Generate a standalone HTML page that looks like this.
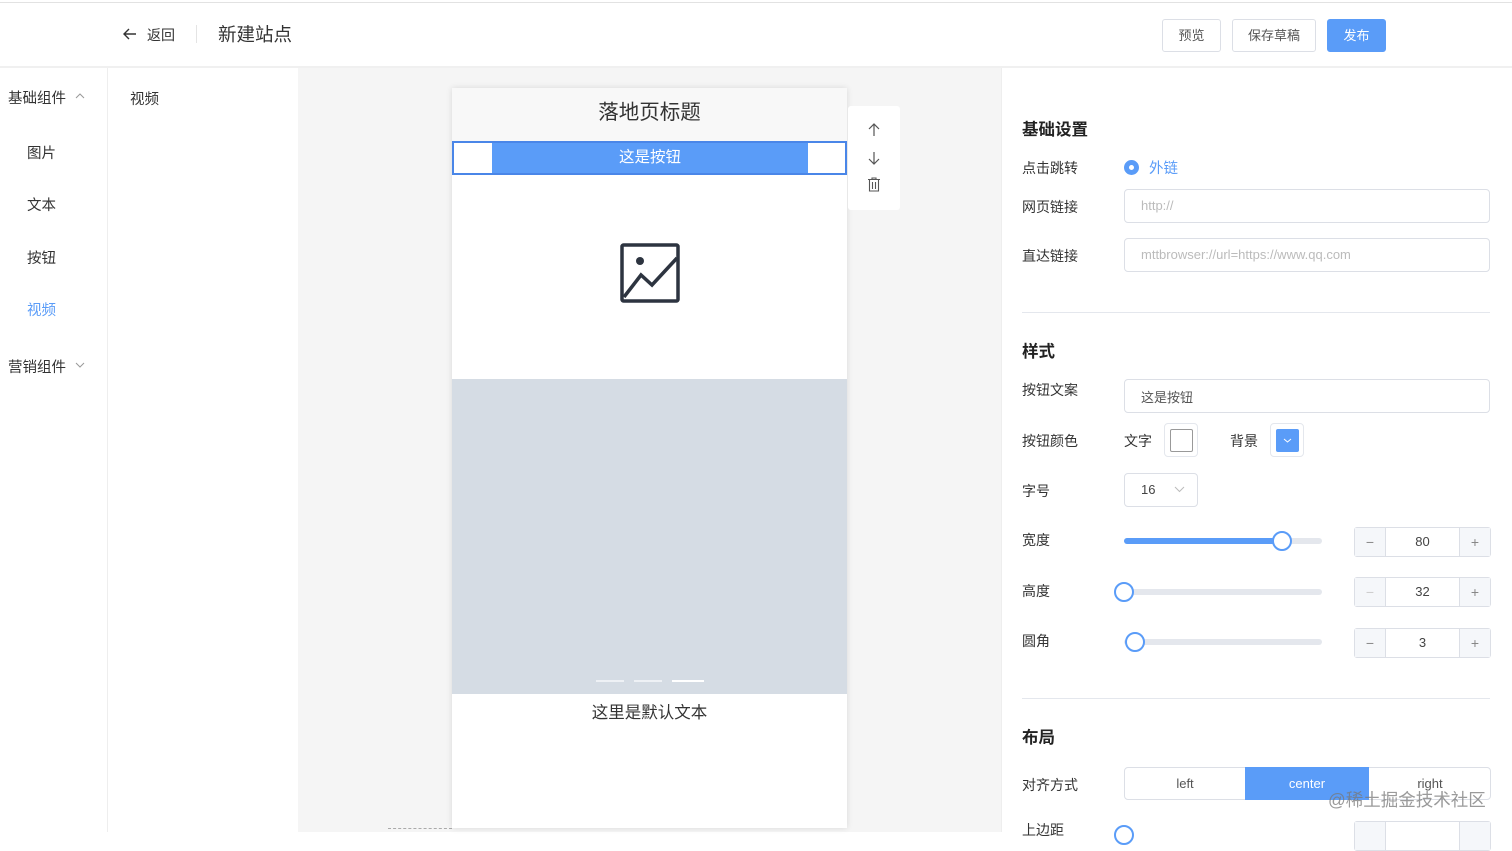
<!DOCTYPE html>
<html><head><meta charset="utf-8"><style>
*{box-sizing:border-box;margin:0;padding:0}
body{width:1512px;height:832px;overflow:hidden;background:#fff;font-family:"Liberation Sans","Noto Sans CJK SC",sans-serif;color:#333;position:relative}
.a{position:absolute}
.lab{position:absolute;left:1022px;font-size:14px;color:#333}
.h{position:absolute;left:1022px;font-size:16px;font-weight:bold;color:#222}
.inp{position:absolute;left:1124px;width:366px;height:34px;border:1px solid #dcdfe6;border-radius:4px;font-size:13px;color:#bbb;padding:8px 16px}
.btn{position:absolute;top:19px;height:33px;border:1px solid #dcdfe6;border-radius:3px;font-size:13px;color:#555;text-align:center;line-height:31px}
.num{position:absolute;left:1354px;width:137px;height:30px;border:1px solid #dcdfe6;border-radius:3px;background:#fff}
.num span{position:absolute;top:0;height:28px;line-height:28px;text-align:center;color:#888;font-size:14px}
.num .m{left:0;width:31px;background:#f5f7fa;border-right:1px solid #dcdfe6}
.num .p{right:0;width:31px;background:#f5f7fa;border-left:1px solid #dcdfe6}
.num .v{left:31px;right:31px;color:#444;font-size:13px}
.track{position:absolute;left:1124px;width:198px;height:6px;border-radius:3px;background:#e4e7ed}
.knob{position:absolute;width:20px;height:20px;border:2px solid #5a9cf8;border-radius:50%;background:#fff}
.sep{position:absolute;left:1022px;width:468px;height:1px;background:#e4e7ed}
</style></head><body>
<div class="a" style="left:0;top:2px;width:1512px;height:1px;background:#e2e2e2"></div>
<div class="a" style="left:0;top:66px;width:1512px;height:2px;background:#f0f0f0"></div>
<svg class="a" style="left:122px;top:27px" width="16" height="14" viewBox="0 0 16 14"><path d="M14 7H2M7 2L2 7l5 5" stroke="#333" stroke-width="1.4" fill="none"/></svg>
<div class="a" style="left:147px;top:25px;font-size:14px">返回</div>
<div class="a" style="left:196px;top:25px;width:1px;height:18px;background:#e4e4e4"></div>
<div class="a" style="left:218px;top:21px;font-size:18.5px;color:#333">新建站点</div>
<div class="btn" style="left:1162px;width:59px">预览</div>
<div class="btn" style="left:1232px;width:84px">保存草稿</div>
<div class="btn" style="left:1327px;width:59px;background:#5a9cf8;border-color:#5a9cf8;color:#fff">发布</div>
<!-- left -->
<div class="a" style="left:107px;top:68px;width:1px;height:764px;background:#eee"></div>
<div class="a" style="left:8px;top:87px;font-size:14.5px">基础组件</div>
<svg class="a" style="left:75px;top:93px" width="10" height="6" viewBox="0 0 10 6"><path d="M1 5l4-4 4 4" stroke="#999" fill="none"/></svg>
<div class="a" style="left:27px;top:142px;font-size:14.5px">图片</div>
<div class="a" style="left:27px;top:194px;font-size:14.5px">文本</div>
<div class="a" style="left:27px;top:247px;font-size:14.5px">按钮</div>
<div class="a" style="left:27px;top:299px;font-size:14.5px;color:#5a9cf8">视频</div>
<div class="a" style="left:8px;top:356px;font-size:14.5px">营销组件</div>
<svg class="a" style="left:75px;top:362px" width="10" height="6" viewBox="0 0 10 6"><path d="M1 1l4 4 4-4" stroke="#999" fill="none"/></svg>
<div class="a" style="left:130px;top:88px;font-size:14.5px">视频</div>
<!-- canvas -->
<div class="a" style="left:298px;top:68px;width:703px;height:764px;background:#f5f5f5"></div>
<div class="a" style="left:1001px;top:68px;width:1px;height:764px;background:#eee"></div>
<div class="a" style="left:388px;top:828px;width:64px;border-top:1px dashed #aaa"></div>
<div class="a" style="left:452px;top:88px;width:395px;height:740px;background:#fff;box-shadow:0 0 6px rgba(0,0,0,.12)"></div>
<div class="a" style="left:452px;top:88px;width:395px;height:53px;background:#f8f8f8;text-align:center;font-size:20.5px;line-height:50px;color:#333">落地页标题</div>
<div class="a" style="left:452px;top:141px;width:395px;height:34px;border:2px solid #4a86e8;background:#fff"></div>
<div class="a" style="left:492px;top:143px;width:316px;height:30px;background:#5a9cf8;color:#fff;text-align:center;line-height:29px;font-size:15.5px">这是按钮</div>
<svg class="a" style="left:620px;top:243px" width="60" height="60" viewBox="0 0 60 60"><rect x="2" y="2" width="56" height="56" rx="1.5" fill="none" stroke="#2d3440" stroke-width="3.5"/><circle cx="20" cy="18" r="4" fill="#2d3440"/><path d="M4 54L21 32l11 10 25-27" fill="none" stroke="#2d3440" stroke-width="3.5"/></svg>
<div class="a" style="left:452px;top:379px;width:395px;height:315px;background:#d5dce4"></div>
<div class="a" style="left:596px;top:680px;width:28px;height:2px;background:#eef1f5"></div>
<div class="a" style="left:634px;top:680px;width:28px;height:2px;background:#eef1f5"></div>
<div class="a" style="left:672px;top:680px;width:32px;height:2px;background:#fff"></div>
<div class="a" style="left:452px;top:699px;width:395px;text-align:center;font-size:16.5px;color:#333">这里是默认文本</div>
<div class="a" style="left:848px;top:106px;width:52px;height:104px;background:#fff;border-radius:3px"></div>
<svg class="a" style="left:867px;top:123px" width="14" height="14" viewBox="0 0 14 14"><path d="M7 13V1M2 6l5-5 5 5" stroke="#555" stroke-width="1.2" fill="none"/></svg>
<svg class="a" style="left:867px;top:151px" width="14" height="14" viewBox="0 0 14 14"><path d="M7 1v12M2 8l5 5 5-5" stroke="#555" stroke-width="1.2" fill="none"/></svg>
<svg class="a" style="left:867px;top:177px" width="14" height="15" viewBox="0 0 14 15"><path d="M1 2.5h12M5 2.5V1h4v1.5M2.5 2.5v11.5h9V2.5M5.5 5v7M8.5 5v7" stroke="#555" stroke-width="1.1" fill="none"/></svg>
<!-- right -->
<div class="h" style="top:116px;font-size:16.5px">基础设置</div>
<div class="lab" style="top:158px">点击跳转</div>
<div class="a" style="left:1124px;top:160px;width:15px;height:15px;border-radius:50%;border:5px solid #5a9cf8;background:#fff"></div>
<div class="a" style="left:1149px;top:157px;font-size:14.5px;color:#5a9cf8">外链</div>
<div class="lab" style="top:197px">网页链接</div>
<div class="inp" style="top:189px">http://</div>
<div class="lab" style="top:246px">直达链接</div>
<div class="inp" style="top:238px">mttbrowser://url=https://www.qq.com</div>
<div class="sep" style="top:312px"></div>
<div class="h" style="top:338px;font-size:16.5px">样式</div>
<div class="lab" style="top:380px">按钮文案</div>
<div class="inp" style="top:379px;color:#555;padding-top:7px">这是按钮</div>
<div class="lab" style="top:431px">按钮颜色</div>
<div class="a" style="left:1124px;top:431px;font-size:14px">文字</div>
<div class="a" style="left:1164px;top:423px;width:34px;height:34px;border:1px solid #e4e7ed;border-radius:4px"><div style="margin:5px;width:23px;height:23px;border:1px solid #999;border-radius:2px"></div></div>
<div class="a" style="left:1230px;top:431px;font-size:14px">背景</div>
<div class="a" style="left:1270px;top:423px;width:34px;height:34px;border:1px solid #e4e7ed;border-radius:4px"><div style="margin:5px;width:23px;height:23px;background:#5a9cf8;border-radius:2px;position:relative"><svg style="position:absolute;left:7px;top:9px" width="9" height="5" viewBox="0 0 9 5"><path d="M1 1l3.5 3L8 1" stroke="#fff" fill="none"/></svg></div></div>
<div class="lab" style="top:481px">字号</div>
<div class="a" style="left:1124px;top:473px;width:74px;height:34px;border:1px solid #dcdfe6;border-radius:4px;font-size:13px;padding:8px 16px;color:#444">16</div>
<svg class="a" style="left:1174px;top:486px" width="11" height="7" viewBox="0 0 11 7"><path d="M1 1l4.5 4.5L10 1" stroke="#bbb" fill="none"/></svg>
<div class="lab" style="top:530px">宽度</div>
<div class="track" style="top:538px"></div><div class="a" style="left:1124px;top:538px;width:158px;height:6px;border-radius:3px;background:#5a9cf8"></div>
<div class="knob" style="left:1272px;top:531px"></div>
<div class="num" style="top:527px"><span class="m">−</span><span class="v">80</span><span class="p">+</span></div>
<div class="lab" style="top:581px">高度</div>
<div class="track" style="top:589px"></div><div class="knob" style="left:1114px;top:582px"></div>
<div class="num" style="top:577px"><span class="m" style="color:#ccc">−</span><span class="v">32</span><span class="p">+</span></div>
<div class="lab" style="top:631px">圆角</div>
<div class="track" style="top:639px"></div><div class="knob" style="left:1125px;top:632px"></div>
<div class="num" style="top:628px"><span class="m">−</span><span class="v">3</span><span class="p">+</span></div>
<div class="sep" style="top:698px"></div>
<div class="h" style="top:724px;font-size:16.5px">布局</div>
<div class="lab" style="top:775px">对齐方式</div>
<div class="a" style="left:1124px;top:767px;width:367px;height:33px;border:1px solid #dcdfe6;border-radius:4px;font-size:13px;color:#555">
<div class="a" style="left:0;width:120px;text-align:center;line-height:31px">left</div>
<div class="a" style="left:120px;width:124px;height:33px;top:-1px;background:#5a9cf8;color:#fff;text-align:center;line-height:33px">center</div>
<div class="a" style="left:244px;width:122px;text-align:center;line-height:31px">right</div></div>
<div class="a" style="left:1328px;top:787px;font-size:17.5px;color:rgba(120,120,120,.75)">@稀土掘金技术社区</div>
<div class="lab" style="top:820px">上边距</div>
<div class="knob" style="left:1114px;top:825px"></div>
<div class="num" style="top:821px"><span class="m"></span><span class="p"></span></div>
</body></html>
